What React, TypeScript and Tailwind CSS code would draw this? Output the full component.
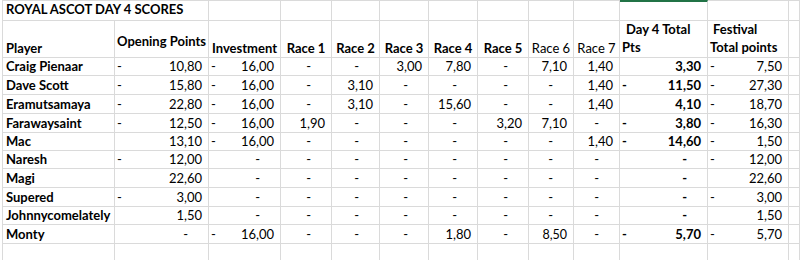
import React from "react";

type Val = [boolean, string | null];

type Row = {
  name: string;
  b: Val;
  c: Val;
  races: (string | null)[];
  k: Val;
  l: Val;
};

const rows: Row[] = [
  { name: "Craig Pienaar", b: [true, "10,80"], c: [true, "16,00"], races: [null, null, "3,00", "7,80", null, "7,10", "1,40"], k: [false, "3,30"], l: [true, "7,50"] },
  { name: "Dave Scott", b: [true, "15,80"], c: [true, "16,00"], races: [null, "3,10", null, null, null, null, "1,40"], k: [true, "11,50"], l: [true, "27,30"] },
  { name: "Eramutsamaya", b: [true, "22,80"], c: [true, "16,00"], races: [null, "3,10", null, "15,60", null, null, "1,40"], k: [false, "4,10"], l: [true, "18,70"] },
  { name: "Farawaysaint", b: [true, "12,50"], c: [true, "16,00"], races: ["1,90", null, null, null, "3,20", "7,10", null], k: [true, "3,80"], l: [true, "16,30"] },
  { name: "Mac", b: [false, "13,10"], c: [true, "16,00"], races: [null, null, null, null, null, null, "1,40"], k: [true, "14,60"], l: [true, "1,50"] },
  { name: "Naresh", b: [true, "12,00"], c: [false, null], races: [null, null, null, null, null, null, null], k: [false, null], l: [true, "12,00"] },
  { name: "Magi", b: [false, "22,60"], c: [false, null], races: [null, null, null, null, null, null, null], k: [false, null], l: [false, "22,60"] },
  { name: "Supered", b: [true, "3,00"], c: [false, null], races: [null, null, null, null, null, null, null], k: [false, null], l: [true, "3,00"] },
  { name: "Johnnycomelately", b: [false, "1,50"], c: [false, null], races: [null, null, null, null, null, null, null], k: [false, null], l: [false, "1,50"] },
  { name: "Monty", b: [false, null], c: [true, "16,00"], races: [null, null, null, "1,80", null, "8,50", null], k: [true, "5,70"], l: [true, "5,70"] },
];

const rowHeights = ["h-[18px]", "h-[19px]", "h-[19px]", "h-[19px]", "h-[18px]", "h-[18px]", "h-[19px]", "h-[19px]", "h-[18px]", "h-[19px]"];

const cellBase = "border-r border-b border-[#dadada] flex items-end leading-[15px] pb-[1px] overflow-visible whitespace-nowrap";

function Acct({ v, bold, h }: { v: Val; bold?: boolean; h: string }) {
  const [neg, val] = v;
  if (val === null) {
    return (
      <div className={`${cellBase} ${h} justify-end ${bold ? "font-bold pr-[20px]" : "pr-[20px]"}`}>
        {neg ? <span className="mr-auto pl-[2px]">-</span> : null}
        <span>-</span>
      </div>
    );
  }
  return (
    <div className={`${cellBase} ${h} justify-between pl-[2px] pr-[6px] ${bold ? "font-bold" : ""}`}>
      <span>{neg ? "-" : ""}</span>
      <span>{val}</span>
    </div>
  );
}

function Race({ v, h, small }: { v: string | null; h: string; small?: boolean }) {
  if (v === null) {
    return <div className={`${cellBase} ${h} justify-end pr-[20px]`}>-</div>;
  }
  return <div className={`${cellBase} ${h} justify-end pr-[6px] ${small ? "text-[12.5px]" : ""}`}>{v}</div>;
}

export default function App() {
  const top = "border-t border-[#dadada]";
  return (
    <div className="w-[800px] h-[260px] overflow-hidden bg-white pl-[2px] text-black text-[13px]" style={{ fontFamily: "Lato, 'Liberation Sans', sans-serif" }}>
      <div className="grid border-l border-[#dadada] grid-cols-[112px_94px_72px_51px_48px_49px_49px_51px_45px_46px_88px_81px_1fr]">
        {/* Row 1 */}
        <div className={`col-span-2 ${cellBase} ${top} h-[21px] pl-[3px] pb-[3px] font-bold`}>ROYAL ASCOT DAY 4 SCORES</div>
        {Array.from({ length: 8 }).map((_, i) => (
          <div key={`t${i}`} className={`${cellBase} ${top} h-[21px]`} />
        ))}
        <div className={`${cellBase} h-[21px] border-t-2 border-t-[#217346]`} />
        <div className={`${cellBase} ${top} h-[21px]`} />
        <div className={`${cellBase} ${top} h-[21px]`} />

        {/* Row 2 header */}
        <div className={`${cellBase} h-[37px] pl-[3px] font-bold`}>Player</div>
        <div className={`border-r border-b border-[#dadada] flex items-center h-[37px] pl-[2px] pt-[3px] font-bold whitespace-nowrap leading-[18px]`}>Opening Points</div>
        <div className={`${cellBase} h-[37px] justify-center font-bold`}>Investment</div>
        {["Race 1", "Race 2", "Race 3", "Race 4", "Race 5"].map((r) => (
          <div key={r} className={`${cellBase} h-[37px] justify-center font-bold`}>{r}</div>
        ))}
        {["Race 6", "Race 7"].map((r) => (
          <div key={r} className={`${cellBase} h-[37px] justify-center`}>{r}</div>
        ))}
        <div className={`border-r border-b border-[#dadada] h-[37px] flex flex-col justify-end pl-[2px] pb-[1px] font-bold leading-[18px] whitespace-nowrap`}>
          <span className="pl-[4px]">Day 4 Total</span>
          <span>Pts</span>
        </div>
        <div className={`border-r border-b border-[#dadada] h-[37px] flex flex-col justify-end pl-[2px] pb-[1px] font-bold leading-[18px] whitespace-nowrap`}>
          <span className="pl-[3px]">Festival</span>
          <span>Total points</span>
        </div>
        <div className={`${cellBase} h-[37px]`} />

        {/* Data rows */}
        {rows.map((r, i) => {
          const h = rowHeights[i];
          return (
            <React.Fragment key={r.name}>
              <div className={`${cellBase} ${h} pl-[3px] font-bold`}>{r.name}</div>
              <Acct v={r.b} h={h} />
              <Acct v={r.c} h={h} />
              {r.races.map((v, j) => (
                <Race key={j} v={v} h={h} small={r.name === "Monty" && j === 5} />
              ))}
              <Acct v={r.k} h={h} bold />
              <Acct v={r.l} h={h} />
              <div className={`${cellBase} ${h}`} />
            </React.Fragment>
          );
        })}

        {/* Empty last row */}
        {Array.from({ length: 13 }).map((_, i) => (
          <div key={`e${i}`} className={`${cellBase} h-[17px]`} />
        ))}
      </div>
    </div>
  );
}
